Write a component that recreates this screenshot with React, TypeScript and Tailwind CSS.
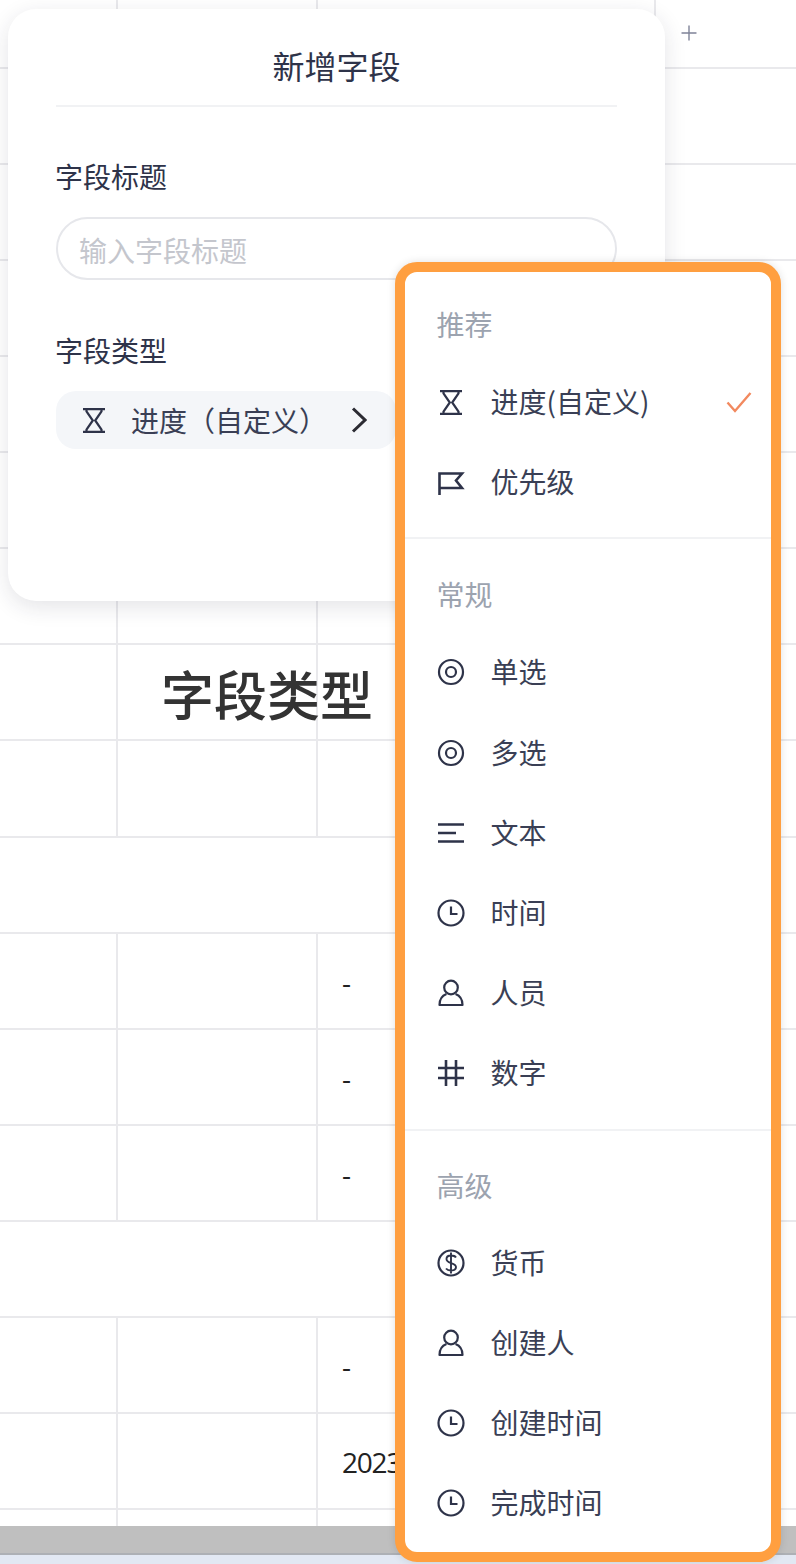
import React from 'react';
import { Plus } from 'lucide-react';

const cjk = "font-['Noto_Sans_CJK_SC','Noto_Sans',sans-serif]";

// background table, row by row: split rows carry the column rules, the others are merged
const rows = [
  { h: 'h-[69px]', split: true, last: true },
  { h: 'h-[96px]' }, { h: 'h-[96px]' }, { h: 'h-[96px]' }, { h: 'h-[96px]' }, { h: 'h-[96px]' },
  { h: 'h-[96px]', split: true },
  { h: 'h-[96px]', split: true },
  { h: 'h-[97px]', split: true },
  { h: 'h-[96px]' },
  { h: 'h-[96px]', split: true, value: '-' },
  { h: 'h-[96px]', split: true, value: '-' },
  { h: 'h-[96px]', split: true, value: '-' },
  { h: 'h-[96px]' },
  { h: 'h-[96px]', split: true, value: '-' },
  { h: 'h-[96px]', split: true, value: '2023-01-01' },
  { h: 'h-[16px]', split: true, open: true },
];

function Table() {
  return (
    <div className="flex flex-col">
      {rows.map((row, i) => (
        <div key={i} className={`${row.h} flex shrink-0 ${row.open ? '' : 'border-b-2 border-[#e9e9ec]'}`}>
          {row.split && (
            <>
              <div className="w-[118px] shrink-0 border-r-2 border-[#e9e9ec]" />
              <div className="w-[200px] shrink-0 border-r-2 border-[#e9e9ec]" />
              <div className="flex w-[338px] shrink-0 items-center whitespace-nowrap border-r-2 border-[#e9e9ec] pl-[24px] pt-[2px] font-['Open_Sans',sans-serif] text-[28px] tracking-[-1.2px] text-[#222]">
                {row.value}
              </div>
              {row.last && (
                <div className="flex flex-1 items-start pl-[21px] pt-[21px] text-[#7f8398]">
                  <Plus size={24} strokeWidth={1.4} />
                </div>
              )}
            </>
          )}
        </div>
      ))}
    </div>
  );
}

const ic = 'h-7 w-7 shrink-0 fill-none stroke-[#2e3349] stroke-[2.2]';

const Hourglass = () => (
  <svg viewBox="0 0 22 25" className="mx-[3px] h-[25px] w-[22px] shrink-0 fill-none stroke-[#2e3349] stroke-[2.2]">
    <path d="M0 1.200h22M0 23.800h22M3.500 1.200V3.500L9.800 12.500L3.500 21.500V23.800M18.500 1.200V3.500L12.200 12.500L18.500 21.500V23.800" />
  </svg>
);
const Flag = () => (
  <svg viewBox="0 0 28 28" className={ic}>
    <path d="M2.500 27V5.500H25L19 12.500L25 20H2.500" strokeWidth="2.600" />
  </svg>
);
const Radio = () => (
  <svg viewBox="0 0 28 28" className={ic}>
    <circle cx="14" cy="14" r="12" />
    <circle cx="14" cy="14" r="5" />
  </svg>
);
const Lines = () => (
  <svg viewBox="0 0 28 28" className={ic}>
    <path d="M1 5.500h26M1 14h18M1 22.500h26" strokeWidth="2.600" />
  </svg>
);
const Clock = () => (
  <svg viewBox="0 0 28 28" className={ic}>
    <circle cx="14" cy="14" r="12.500" />
    <path d="M14 7.500v7.500h6.500" />
  </svg>
);
const Person = () => (
  <svg viewBox="0 0 28 28" className={ic}>
    <circle cx="14" cy="8.500" r="6.800" />
    <path d="M9.500 15C5.500 16.500 2.500 20.500 2.500 26h23c0-5.500-3-9.500-7-11" strokeLinejoin="round" />
  </svg>
);
const Hash = () => (
  <svg viewBox="0 0 28 28" className={ic}>
    <path d="M9 1v26M19 1v26M1 9h26M1 19h26" strokeWidth="2.600" />
  </svg>
);
const Dollar = () => (
  <svg viewBox="0 0 28 28" className={ic}>
    <circle cx="14" cy="14" r="12.500" />
    <path d="M19 8.500c-1-1.500-3-2-5-2c-2.800 0-4.500 1.500-4.500 3.500c0 2.500 2 3.200 4.500 4c2.600.8 5 1.500 5 4c0 2-2 3.500-5 3.500c-2.200 0-4-.7-5-2M14 3.500v21" strokeWidth="1.900" />
  </svg>
);

const groups = [
  {
    title: '推荐',
    gap: '',
    items: [
      { icon: <Hourglass />, label: '进度(自定义)', checked: true },
      { icon: <Flag />, label: '优先级' },
    ],
  },
  {
    title: '常规',
    gap: 'mt-[15px] border-t-2 border-[#f1f2f4] pt-[35px]',
    items: [
      { icon: <Radio />, label: '单选' },
      { icon: <Radio />, label: '多选' },
      { icon: <Lines />, label: '文本' },
      { icon: <Clock />, label: '时间' },
      { icon: <Person />, label: '人员' },
      { icon: <Hash />, label: '数字' },
    ],
  },
  {
    title: '高级',
    gap: 'mt-[15px] border-t-2 border-[#f1f2f4] pt-[34px]',
    items: [
      { icon: <Dollar />, label: '货币' },
      { icon: <Person />, label: '创建人' },
      { icon: <Clock />, label: '创建时间' },
      { icon: <Clock />, label: '完成时间' },
    ],
  },
];

function TypeMenu() {
  return (
    <div className={`${cjk} absolute left-[395px] top-[262px] h-[1300px] w-[386px] overflow-hidden rounded-[22px] border-[10px] border-[#ff9f40] bg-white pt-[32px] shadow-[0_0_8px_rgba(0,0,0,0.12)]`}>
      {groups.map((group) => (
        <div key={group.title} className={group.gap}>
          <div className="mb-[18px] flex h-[40px] items-center pl-[31.5px] text-[28px] text-[#9ca3af]">{group.title}</div>
          {group.items.map((item) => (
            <div key={item.label} className="flex h-[80.2px] items-center pl-[32px] pr-[19px] text-[28px] text-[#3a3f55]">
              {item.icon}
              <span className="ml-[25.5px] flex-1 whitespace-nowrap pb-[2px]">{item.label}</span>
              {item.checked && (
                <svg viewBox="0 0 26 22" className="h-[22px] w-[26px] fill-none stroke-[#f2895f] stroke-[2.400]">
                  <path d="M1.500 11.500l7.500 8.500L24.500 2" />
                </svg>
              )}
            </div>
          ))}
        </div>
      ))}
    </div>
  );
}

function FieldModal() {
  return (
    <div className={`${cjk} absolute left-[8px] top-[9px] h-[592px] w-[657px] rounded-[28px] bg-white px-[48px] shadow-[0_6px_22px_rgba(30,35,60,0.12)]`}>
      <div className="flex h-[98px] items-center justify-center border-b-2 border-[#f1f2f4] pt-[15px] text-[32px] text-[#2e3349]">新增字段</div>
      <div className="-ml-px mt-[48px] text-[28px] leading-[42px] text-[#2e3349]">字段标题</div>
      <div className="mt-[20px] flex h-[63px] items-center rounded-full border-2 border-[#e6e7eb] pl-[21px] pt-[3px] text-[28px] text-[#c4c6cd]">输入字段标题</div>
      <div className="-ml-px mt-[49px] text-[28px] leading-[42px] text-[#2e3349]">字段类型</div>
      <div className="mt-[20px] flex h-[58px] w-[340px] items-center rounded-[20px] bg-[#f4f6f9] pl-[24px] text-[28px] text-[#3a3f55]">
        <Hourglass />
        <span className="ml-[23px] whitespace-nowrap">进度（自定义）</span>
        <svg viewBox="0 0 16 26" className="ml-[24px] h-[26px] w-[16px] shrink-0 fill-none stroke-[#2b2b33] stroke-[3]">
          <path d="M2 1.500L14 13L2 24.500" />
        </svg>
      </div>
    </div>
  );
}

export default function App() {
  return (
    <div className="relative flex h-[1564px] w-[796px] flex-col overflow-hidden bg-white">
      <Table />
      <div className="h-[29px] shrink-0 border-b-2 border-[#adb0b5] bg-[#bfbfbf]" />
      <div className="flex-1 bg-[#e2e8f3]" />
      <div className={`${cjk} absolute left-[161px] top-[654px] text-[53px] font-medium leading-[78px] text-[#333]`}>字段类型</div>
      <FieldModal />
      <TypeMenu />
    </div>
  );
}
